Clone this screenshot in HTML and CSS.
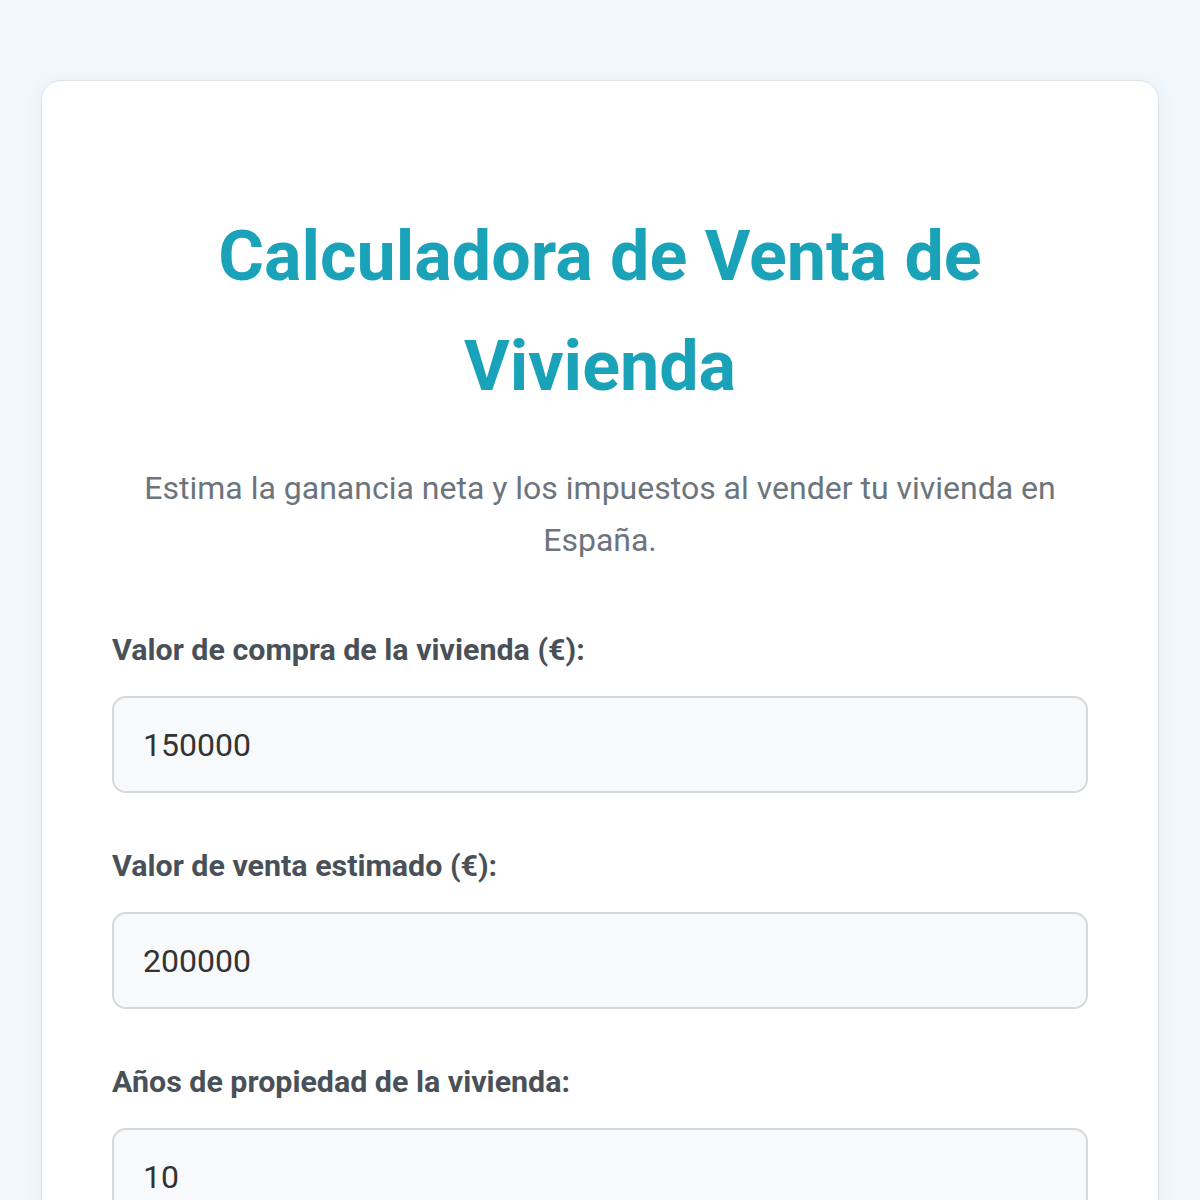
FILE: index.html
```html
<!DOCTYPE html>
<html lang="es">
<head>
    <meta charset="UTF-8">
    <meta name="viewport" content="width=device-width, initial-scale=1.0">
    <title>Calculadora de Venta de Vivienda</title>
    <link rel="stylesheet" href="styles.css">
</head>
<body>
    <div class="calculator">
        <h1>Calculadora de Venta de Vivienda</h1>
        <p class="intro">Estima la ganancia neta y los impuestos al vender tu vivienda en España.</p>

        <div class="form-group">
            <label for="compra">Valor de compra de la vivienda (€):</label>
            <input type="number" id="compra" value="150000">
        </div>

        <div class="form-group">
            <label for="venta">Valor de venta estimado (€):</label>
            <input type="number" id="venta" value="200000">
        </div>

        <div class="form-group">
            <label for="anos">Años de propiedad de la vivienda:</label>
            <input type="number" id="anos" value="10">
        </div>
    </div>
</body>
</html>
```

FILE: styles.css
```css
/* 全体 */
body {
    margin: 0;
    padding: 80px 41px;
    font-family: 'Roboto', 'Liberation Sans', sans-serif;
    background-color: #f0f7fd;
    color: #333;
}

/* カード */
.calculator {
    padding: 120px 70px 70px;
    background-color: #fff;
    border: 1px solid #dfe3e7;
    border-radius: 20px;
    box-shadow: 0 4px 20px rgba(0, 0, 0, 0.05);
}

h1 {
    margin: 0 0 41px;
    font-size: 70px;
    line-height: 110px;
    font-weight: 700;
    color: #1aa3b8;
    text-align: center;
}

.intro {
    margin: 0 0 61px;
    font-size: 32px;
    line-height: 52px;
    color: #6c757d;
    text-align: center;
}

/* フォーム */
.form-group {
    margin-bottom: 50px;
}

.form-group label {
    display: block;
    margin-bottom: 23px;
    font-size: 30.4px;
    line-height: 46px;
    font-weight: 700;
    color: #495057;
}

.form-group input {
    display: block;
    box-sizing: border-box;
    width: 100%;
    height: 97px;
    padding: 0 29px;
    font-family: inherit;
    font-size: 32px;
    color: #333;
    background-color: #f8f9fa;
    border: 2px solid #d5d9dd;
    border-radius: 14px;
    outline: none;
    -moz-appearance: textfield;
}

.form-group input::-webkit-outer-spin-button,
.form-group input::-webkit-inner-spin-button {
    -webkit-appearance: none;
    margin: 0;
}
```
